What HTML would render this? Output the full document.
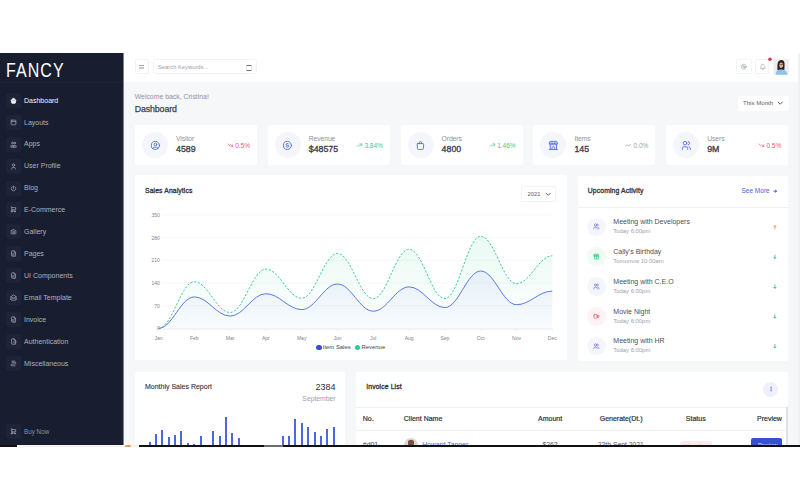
<!DOCTYPE html>
<html><head><meta charset="utf-8">
<style>
*{margin:0;padding:0;box-sizing:border-box}
html,body{width:800px;height:500px;overflow:hidden;background:#fff;font-family:"Liberation Sans",sans-serif}
.a{position:absolute;white-space:nowrap}
#sb{left:0;top:53px;width:123px;height:392px;background:#181d30}
.logo{left:6.3px;top:60.6px;font-size:19.3px;line-height:20px;color:#fff;letter-spacing:1.3px;transform:scaleX(0.83);transform-origin:0 0}
.ib{width:15px;height:15px;border-radius:2px;background:#1e2338}
.mt{font-size:7px;line-height:8px;color:#a3a8b5}
#hd{left:124px;top:53px;width:676px;height:29.7px;background:#fff;border-bottom:1px solid #eef0f3}
#main{left:124px;top:82px;width:676px;height:363px;background:#f6f7f9}
.card{background:#fff;border-radius:2.5px}
.hb{border:1px solid #f2f3f5;border-radius:1.8px;background:#fff}
.lbl{font-size:6.8px;line-height:8px;color:#8b93a5;letter-spacing:-0.1px}
.val{font-size:8.8px;line-height:10px;color:#3d424c;-webkit-text-stroke:0.35px #3d424c}
.ic{width:26px;height:26px;border-radius:50%;background:#f5f6fb}
.pct{font-size:6.5px;line-height:8px}
.ttl{font-size:6.8px;line-height:8px;color:#2e3340;-webkit-text-stroke:0.3px #2e3340;letter-spacing:0.12px}
.ax{font-size:5px;line-height:6px;color:#7d838f}
.at{font-size:7px;line-height:8px;color:#4b5060}
.as{font-size:5.9px;line-height:7px;color:#9ba1ad}
.aic{width:18.7px;height:18.7px;border-radius:50%}
.th{font-size:7px;line-height:8px;color:#2f3440;-webkit-text-stroke:0.2px #2f3440}
</style></head><body>

<div id="sb" class="a"></div>
<div class="a logo">FANCY</div>
<div class="a" style="left:0;top:82.3px;width:124px;height:1px;background:#1e2336"></div>
<div class="a ib" style="left:5.5px;top:92.80px"></div>
<svg class="a" style="left:9.50px;top:96.80px;" width="7" height="7" viewBox="0 0 24 24" fill="#f3f4f7" stroke="#f3f4f7" stroke-width="2.6" stroke-linecap="round" stroke-linejoin="round"><path d="M5 12H3l9-9 9 9h-2"/><path d="M5 12v7a2 2 0 0 0 2 2h10a2 2 0 0 0 2-2v-7"/><path d="M9 21v-6h6v6"/></svg>
<div class="a mt" style="left:24px;top:96.60px;color:#f3f4f7">Dashboard</div>
<div class="a ib" style="left:5.5px;top:114.72px"></div>
<svg class="a" style="left:9.50px;top:118.72px;" width="7" height="7" viewBox="0 0 24 24" fill="none" stroke="#9ca1ae" stroke-width="2.6" stroke-linecap="round" stroke-linejoin="round"><rect x="4" y="4" width="16" height="16" rx="2"/><path d="M4 9h16"/></svg>
<div class="a mt" style="left:24px;top:118.52px;color:#adb2bd">Layouts</div>
<div class="a ib" style="left:5.5px;top:136.65px"></div>
<svg class="a" style="left:9.50px;top:140.65px;" width="7" height="7" viewBox="0 0 24 24" fill="none" stroke="#9ca1ae" stroke-width="2.6" stroke-linecap="round" stroke-linejoin="round"><circle cx="8" cy="7" r="3"/><circle cx="16" cy="7" r="3"/><path d="M3 20v-4h10v4z"/><path d="M11 20v-4h10v4z"/></svg>
<div class="a mt" style="left:24px;top:140.45px;color:#adb2bd">Apps</div>
<div class="a ib" style="left:5.5px;top:158.57px"></div>
<svg class="a" style="left:9.50px;top:162.57px;" width="7" height="7" viewBox="0 0 24 24" fill="none" stroke="#9ca1ae" stroke-width="2.6" stroke-linecap="round" stroke-linejoin="round"><circle cx="12" cy="7" r="4"/><path d="M6 21v-2a4 4 0 0 1 4-4h4a4 4 0 0 1 4 4v2"/></svg>
<div class="a mt" style="left:24px;top:162.38px;color:#adb2bd">User Profile</div>
<div class="a ib" style="left:5.5px;top:180.50px"></div>
<svg class="a" style="left:9.50px;top:184.50px;" width="7" height="7" viewBox="0 0 24 24" fill="none" stroke="#9ca1ae" stroke-width="2.6" stroke-linecap="round" stroke-linejoin="round"><path d="M7 6a7.75 7.75 0 1 0 10 0"/><path d="M12 4v8"/></svg>
<div class="a mt" style="left:24px;top:184.30px;color:#adb2bd">Blog</div>
<div class="a ib" style="left:5.5px;top:202.43px"></div>
<svg class="a" style="left:9.50px;top:206.43px;" width="7" height="7" viewBox="0 0 24 24" fill="none" stroke="#9ca1ae" stroke-width="2.6" stroke-linecap="round" stroke-linejoin="round"><circle cx="6" cy="19" r="2"/><circle cx="17" cy="19" r="2"/><path d="M17 17H6V3H4"/><path d="M6 5l14 1-1 7H6"/></svg>
<div class="a mt" style="left:24px;top:206.23px;color:#adb2bd">E-Commerce</div>
<div class="a ib" style="left:5.5px;top:224.35px"></div>
<svg class="a" style="left:9.50px;top:228.35px;" width="7" height="7" viewBox="0 0 24 24" fill="none" stroke="#9ca1ae" stroke-width="2.6" stroke-linecap="round" stroke-linejoin="round"><path d="M5 8h3l2-3h4l2 3h3a1 1 0 0 1 1 1v10a1 1 0 0 1-1 1H5a1 1 0 0 1-1-1V9a1 1 0 0 1 1-1"/><circle cx="12" cy="14" r="3"/></svg>
<div class="a mt" style="left:24px;top:228.15px;color:#adb2bd">Gallery</div>
<div class="a ib" style="left:5.5px;top:246.27px"></div>
<svg class="a" style="left:9.50px;top:250.27px;" width="7" height="7" viewBox="0 0 24 24" fill="none" stroke="#9ca1ae" stroke-width="2.6" stroke-linecap="round" stroke-linejoin="round"><path d="M14 3v4a1 1 0 0 0 1 1h4"/><path d="M17 21H7a2 2 0 0 1-2-2V5a2 2 0 0 1 2-2h7l5 5v11a2 2 0 0 1-2 2z"/><path d="M9 13h6M9 17h4"/></svg>
<div class="a mt" style="left:24px;top:250.07px;color:#adb2bd">Pages</div>
<div class="a ib" style="left:5.5px;top:268.20px"></div>
<svg class="a" style="left:9.50px;top:272.20px;" width="7" height="7" viewBox="0 0 24 24" fill="none" stroke="#9ca1ae" stroke-width="2.6" stroke-linecap="round" stroke-linejoin="round"><path d="M14 3v4a1 1 0 0 0 1 1h4"/><path d="M17 21H7a2 2 0 0 1-2-2V5a2 2 0 0 1 2-2h7l5 5v11a2 2 0 0 1-2 2z"/><path d="M9 13h6M9 17h4"/></svg>
<div class="a mt" style="left:24px;top:272.00px;color:#adb2bd">UI Components</div>
<div class="a ib" style="left:5.5px;top:290.12px"></div>
<svg class="a" style="left:9.50px;top:294.12px;" width="7" height="7" viewBox="0 0 24 24" fill="none" stroke="#9ca1ae" stroke-width="2.6" stroke-linecap="round" stroke-linejoin="round"><path d="M3 9l9 6 9-6-9-6-9 6v10a2 2 0 0 0 2 2h14a2 2 0 0 0 2-2V9"/><path d="M3 19l6-6"/><path d="M15 13l6 6"/></svg>
<div class="a mt" style="left:24px;top:293.93px;color:#adb2bd">Email Template</div>
<div class="a ib" style="left:5.5px;top:312.05px"></div>
<svg class="a" style="left:9.50px;top:316.05px;" width="7" height="7" viewBox="0 0 24 24" fill="none" stroke="#9ca1ae" stroke-width="2.6" stroke-linecap="round" stroke-linejoin="round"><path d="M14 3v4a1 1 0 0 0 1 1h4"/><path d="M17 21H7a2 2 0 0 1-2-2V5a2 2 0 0 1 2-2h7l5 5v11a2 2 0 0 1-2 2z"/><path d="M9 13h6M9 17h4"/></svg>
<div class="a mt" style="left:24px;top:315.85px;color:#adb2bd">Invoice</div>
<div class="a ib" style="left:5.5px;top:333.98px"></div>
<svg class="a" style="left:9.50px;top:337.98px;" width="7" height="7" viewBox="0 0 24 24" fill="none" stroke="#9ca1ae" stroke-width="2.6" stroke-linecap="round" stroke-linejoin="round"><path d="M14 3v4a1 1 0 0 0 1 1h4"/><path d="M17 21H7a2 2 0 0 1-2-2V5a2 2 0 0 1 2-2h7l5 5v11a2 2 0 0 1-2 2z"/><path d="M11 14h10"/></svg>
<div class="a mt" style="left:24px;top:337.78px;color:#adb2bd">Authentication</div>
<div class="a ib" style="left:5.5px;top:355.90px"></div>
<svg class="a" style="left:9.50px;top:359.90px;" width="7" height="7" viewBox="0 0 24 24" fill="none" stroke="#9ca1ae" stroke-width="2.6" stroke-linecap="round" stroke-linejoin="round"><path d="M17 20H7a3 3 0 0 1 0-6h10a3 3 0 0 0 0-6H7"/><path d="M7 4h10"/></svg>
<div class="a mt" style="left:24px;top:359.70px;color:#adb2bd">Miscellaneous</div>
<div class="a ib" style="left:5.5px;top:424.20px"></div>
<svg class="a" style="left:9.50px;top:428.20px;" width="7" height="7" viewBox="0 0 24 24" fill="none" stroke="#9ca1ae" stroke-width="2.6" stroke-linecap="round" stroke-linejoin="round"><circle cx="6" cy="19" r="2"/><circle cx="17" cy="19" r="2"/><path d="M17 17H6V3H4"/><path d="M6 5l14 1-1 7H6"/></svg>
<div class="a mt" style="left:24px;top:427.80px;color:#8c92a0;font-size:6.3px">Buy Now</div>
<div id="hd" class="a"></div>
<div class="a hb" style="left:134.5px;top:59.3px;width:14px;height:14.8px;border-radius:2px"></div>
<div class="a" style="left:139px;top:65px;width:5.1px;height:0.8px;background:#9da2ac"></div><div class="a" style="left:139px;top:67.2px;width:5.1px;height:1.4px;background:#c4c7cd"></div>
<div class="a hb" style="left:152.5px;top:59.2px;width:104.2px;height:15px;border-radius:2.5px"></div>
<div class="a" style="left:158px;top:63.5px;font-size:5.8px;line-height:7px;color:#9aa0ab">Search Keywords...</div>
<div class="a" style="left:246.2px;top:65px;width:5.4px;height:6px;border-left:0.3px solid #e6e7ea;border-right:0.3px solid #e6e7ea;border-top:1px solid #6a6f78;border-bottom:1px solid #6a6f78;border-radius:1px"></div>
<div class="a hb" style="left:736px;top:59px;width:15.5px;height:15px"></div>
<svg class="a" style="left:740.20px;top:63.00px;" width="7.5" height="7.5" viewBox="0 0 24 24" fill="none" stroke="#a0a5b0" stroke-width="2" stroke-linecap="round" stroke-linejoin="round"><circle cx="12" cy="12" r="8"/><path d="M8 8l8 8"/><circle cx="12" cy="12" r="3"/></svg>
<div class="a hb" style="left:755.3px;top:59px;width:14px;height:15px"></div>
<svg class="a" style="left:758.50px;top:62.50px;" width="7.5" height="7.5" viewBox="0 0 24 24" fill="none" stroke="#a0a5b0" stroke-width="1.8" stroke-linecap="round" stroke-linejoin="round"><path d="M10 5a2 2 0 1 1 4 0a7 7 0 0 1 4 6v3a4 4 0 0 0 2 3H4a4 4 0 0 0 2-3v-3a7 7 0 0 1 4-6"/><path d="M9 17v1a3 3 0 0 0 6 0v-1"/></svg>
<svg class="a" style="left:0;top:0" width="800" height="500"><circle cx="770" cy="59.3" r="1.8" fill="#e8334d"/></svg>
<svg class="a" style="left:0;top:0" width="800" height="500"><rect x="773.5" y="58.8" width="15.6" height="16" rx="1.5" fill="#eceef0"/><path d="M777.6,70.5 C777.2,66 777.3,62 779.2,60.7 C780.5,59.8 782.3,59.8 783.4,60.7 C785,62 784.6,66 784.3,70.5 Z" fill="#2a2020"/><ellipse cx="781.2" cy="65.3" rx="1.9" ry="2.8" fill="#dcae98"/><path d="M779.5,64.6 h3.5" stroke="#3a3030" stroke-width="0.6"/><path d="M775.6,74.8 C775.8,71 777.5,69.6 781,69.5 C784.6,69.6 787,71 787.5,74.8 Z" fill="#8ec4ea"/></svg>
<div id="main" class="a"></div>
<div class="a" style="left:123px;top:53px;width:1px;height:392px;background:#80838e"></div>
<div class="a" style="left:798px;top:53px;width:1.5px;height:392px;background:#f0f1f3"></div>
<div class="a" style="left:134.7px;top:92.8px;font-size:6.9px;line-height:8px;color:#8a93a6">Welcome back, Cristina!</div>
<div class="a" style="left:134.7px;top:103.7px;font-size:8.8px;line-height:10px;color:#3a3f4b;-webkit-text-stroke:0.25px #3a3f4b;letter-spacing:-0.1px">Dashboard</div>
<div class="a card" style="left:737.9px;top:95.6px;width:50.7px;height:15.3px;border-radius:2px"></div>
<div class="a" style="left:743px;top:98.8px;font-size:6.1px;line-height:7px;color:#5d626e">This Month</div>
<svg class="a" style="left:775.80px;top:99.20px;" width="8.4" height="8.4" viewBox="0 0 24 24" fill="none" stroke="#3f444e" stroke-width="2.5" stroke-linecap="round" stroke-linejoin="round"><path d="M6 9l6 6 6-6"/></svg>
<div class="a card" style="left:135.0px;top:125px;width:122px;height:40px"></div>
<div class="a ic" style="left:142.0px;top:132px"></div>
<svg class="a" style="left:149.60px;top:139.60px;" width="10.8" height="10.8" viewBox="0 0 24 24" fill="none" stroke="#3f5fe0" stroke-width="1.8" stroke-linecap="round" stroke-linejoin="round"><circle cx="12" cy="12" r="9"/><circle cx="12" cy="10" r="3"/><path d="M6.2 18.8A4 4 0 0 1 10 16h4a4 4 0 0 1 3.8 2.9"/></svg>
<div class="a lbl" style="left:176.0px;top:134.6px">Visitor</div>
<div class="a val" style="left:176.0px;top:144.3px">4589</div>
<div class="a pct" style="right:550.0px;top:141.9px;color:#ef5a6f">0.5%</div>
<svg class="a" style="left:227.00px;top:142.00px;" width="6.6" height="6.6" viewBox="0 0 24 24" fill="none" stroke="#ef5a6f" stroke-width="2.4" stroke-linecap="round" stroke-linejoin="round"><path d="M3 7l6 6 4-4 8 8"/><path d="M21 10v7h-7"/></svg>
<div class="a card" style="left:267.8px;top:125px;width:122px;height:40px"></div>
<div class="a ic" style="left:274.8px;top:132px"></div>
<svg class="a" style="left:282.40px;top:139.60px;" width="10.8" height="10.8" viewBox="0 0 24 24" fill="none" stroke="#3f5fe0" stroke-width="1.8" stroke-linecap="round" stroke-linejoin="round"><circle cx="12" cy="12" r="9"/><path d="M14.8 9A2 2 0 0 0 13 8h-2a2 2 0 0 0 0 4h2a2 2 0 0 1 0 4h-2a2 2 0 0 1-1.8-1"/></svg>
<div class="a lbl" style="left:308.8px;top:134.6px">Revenue</div>
<div class="a val" style="left:308.8px;top:144.3px">$48575</div>
<div class="a pct" style="right:417.2px;top:141.9px;color:#3cc98a">3.84%</div>
<svg class="a" style="left:356.00px;top:142.00px;" width="6.6" height="6.6" viewBox="0 0 24 24" fill="none" stroke="#3cc98a" stroke-width="2.4" stroke-linecap="round" stroke-linejoin="round"><path d="M3 17l6-6 4 4 8-8"/><path d="M14 7h7v7"/></svg>
<div class="a card" style="left:400.6px;top:125px;width:122px;height:40px"></div>
<div class="a ic" style="left:407.6px;top:132px"></div>
<svg class="a" style="left:415.20px;top:139.60px;" width="10.8" height="10.8" viewBox="0 0 24 24" fill="none" stroke="#3f5fe0" stroke-width="1.8" stroke-linecap="round" stroke-linejoin="round"><path d="M6.3 8h11.4a1.5 1.5 0 0 1 1.5 1.6l-.7 9.4a2 2 0 0 1-2 2H7.5a2 2 0 0 1-2-2l-.7-9.4A1.5 1.5 0 0 1 6.3 8z"/><path d="M9.5 8V6a2.5 2.5 0 0 1 5 0v2"/></svg>
<div class="a lbl" style="left:441.6px;top:134.6px">Orders</div>
<div class="a val" style="left:441.6px;top:144.3px">4800</div>
<div class="a pct" style="right:284.4px;top:141.9px;color:#3cc98a">1.46%</div>
<svg class="a" style="left:488.80px;top:142.00px;" width="6.6" height="6.6" viewBox="0 0 24 24" fill="none" stroke="#3cc98a" stroke-width="2.4" stroke-linecap="round" stroke-linejoin="round"><path d="M3 17l6-6 4 4 8-8"/><path d="M14 7h7v7"/></svg>
<div class="a card" style="left:533.4px;top:125px;width:122px;height:40px"></div>
<div class="a ic" style="left:540.4px;top:132px"></div>
<svg class="a" style="left:548.00px;top:139.60px;" width="10.8" height="10.8" viewBox="0 0 24 24" fill="none" stroke="#3f5fe0" stroke-width="1.8" stroke-linecap="round" stroke-linejoin="round"><path d="M3 21h18"/><path d="M3 7v1a3 3 0 0 0 6 0V7m0 1a3 3 0 0 0 6 0V7m0 1a3 3 0 0 0 6 0V7H3l2-4h14l2 4"/><path d="M5 21V10.85"/><path d="M19 21V10.85"/><path d="M9 21v-4a2 2 0 0 1 2-2h2a2 2 0 0 1 2 2v4"/></svg>
<div class="a lbl" style="left:574.4px;top:134.6px">Items</div>
<div class="a val" style="left:574.4px;top:144.3px">145</div>
<div class="a pct" style="right:151.6px;top:141.9px;color:#9aa0ab">0.0%</div>
<svg class="a" style="left:625.40px;top:142.00px;" width="6.6" height="6.6" viewBox="0 0 24 24" fill="none" stroke="#9aa0ab" stroke-width="2.4" stroke-linecap="round" stroke-linejoin="round"><path d="M3 15l6-5 4 4 8-6"/></svg>
<div class="a card" style="left:666.2px;top:125px;width:122px;height:40px"></div>
<div class="a ic" style="left:673.2px;top:132px"></div>
<svg class="a" style="left:680.80px;top:139.60px;" width="10.8" height="10.8" viewBox="0 0 24 24" fill="none" stroke="#3f5fe0" stroke-width="1.8" stroke-linecap="round" stroke-linejoin="round"><circle cx="9" cy="7" r="4"/><path d="M3 21v-2a4 4 0 0 1 4-4h4a4 4 0 0 1 4 4v2"/><path d="M16 3.13a4 4 0 0 1 0 7.75"/><path d="M21 21v-2a4 4 0 0 0-3-3.85"/></svg>
<div class="a lbl" style="left:707.2px;top:134.6px">Users</div>
<div class="a val" style="left:707.2px;top:144.3px">9M</div>
<div class="a pct" style="right:18.8px;top:141.9px;color:#ef5a6f">0.5%</div>
<svg class="a" style="left:758.20px;top:142.00px;" width="6.6" height="6.6" viewBox="0 0 24 24" fill="none" stroke="#ef5a6f" stroke-width="2.4" stroke-linecap="round" stroke-linejoin="round"><path d="M3 7l6 6 4-4 8 8"/><path d="M21 10v7h-7"/></svg>
<div class="a card" style="left:135px;top:175.4px;width:432px;height:184.6px"></div>
<div class="a ttl" style="left:145px;top:187.3px">Sales Analytics</div>
<div class="a hb" style="left:521.3px;top:186px;width:35px;height:16.2px;border-radius:2px"></div>
<div class="a" style="left:527.5px;top:190.8px;font-size:5.8px;line-height:7px;color:#555a66">2021</div>
<svg class="a" style="left:543.90px;top:189.80px;" width="8.5" height="8.5" viewBox="0 0 24 24" fill="none" stroke="#444955" stroke-width="2.4" stroke-linecap="round" stroke-linejoin="round"><path d="M6 9l6 6 6-6"/></svg>
<div class="a ax" style="right:640.2px;top:325.3px">0</div>
<div class="a ax" style="right:640.2px;top:302.6px">70</div>
<div class="a ax" style="right:640.2px;top:279.9px">140</div>
<div class="a ax" style="right:640.2px;top:257.2px">210</div>
<div class="a ax" style="right:640.2px;top:234.5px">280</div>
<div class="a ax" style="right:640.2px;top:211.8px">350</div>
<div class="a ax" style="left:148.5px;width:20px;text-align:center;top:334.7px">Jan</div>
<div class="a ax" style="left:184.3px;width:20px;text-align:center;top:334.7px">Feb</div>
<div class="a ax" style="left:220.1px;width:20px;text-align:center;top:334.7px">Mar</div>
<div class="a ax" style="left:255.9px;width:20px;text-align:center;top:334.7px">Apr</div>
<div class="a ax" style="left:291.7px;width:20px;text-align:center;top:334.7px">May</div>
<div class="a ax" style="left:327.5px;width:20px;text-align:center;top:334.7px">Jun</div>
<div class="a ax" style="left:363.3px;width:20px;text-align:center;top:334.7px">Jul</div>
<div class="a ax" style="left:399.1px;width:20px;text-align:center;top:334.7px">Aug</div>
<div class="a ax" style="left:434.9px;width:20px;text-align:center;top:334.7px">Sep</div>
<div class="a ax" style="left:470.7px;width:20px;text-align:center;top:334.7px">Oct</div>
<div class="a ax" style="left:506.5px;width:20px;text-align:center;top:334.7px">Nov</div>
<div class="a ax" style="left:542.3px;width:20px;text-align:center;top:334.7px">Dec</div>
<svg class="a" style="left:0;top:0" width="800" height="500">
<defs>
<linearGradient id="gg" x1="0" y1="0" x2="0" y2="1"><stop offset="0" stop-color="#2fd08c" stop-opacity="0.10"/><stop offset="1" stop-color="#2fd08c" stop-opacity="0.01"/></linearGradient>
<linearGradient id="bg" x1="0" y1="0" x2="0" y2="1"><stop offset="0" stop-color="#4a6cf7" stop-opacity="0.08"/><stop offset="1" stop-color="#4a6cf7" stop-opacity="0.02"/></linearGradient>
</defs>
<line x1="163" x2="552.3" y1="328.4" y2="328.4" stroke="#f3f4f6" stroke-width="0.7"/><line x1="163" x2="552.3" y1="305.7" y2="305.7" stroke="#f3f4f6" stroke-width="0.7"/><line x1="163" x2="552.3" y1="283.0" y2="283.0" stroke="#f3f4f6" stroke-width="0.7"/><line x1="163" x2="552.3" y1="260.3" y2="260.3" stroke="#f3f4f6" stroke-width="0.7"/><line x1="163" x2="552.3" y1="237.6" y2="237.6" stroke="#f3f4f6" stroke-width="0.7"/><line x1="163" x2="552.3" y1="214.9" y2="214.9" stroke="#f3f4f6" stroke-width="0.7"/><path d="M158.5,328.4 C172.1,328.4 180.7,281.7 194.3,281.7 C207.9,281.7 216.5,312.5 230.1,312.5 C243.7,312.5 252.3,269.1 265.9,269.1 C279.5,269.1 288.1,298.2 301.7,298.2 C315.3,298.2 323.9,253.5 337.5,253.5 C351.1,253.5 359.7,298.6 373.3,298.6 C386.9,298.6 395.5,249.3 409.1,249.3 C422.7,249.3 431.3,298.6 444.9,298.6 C458.5,298.6 467.1,236.3 480.7,236.3 C494.3,236.3 502.9,283.6 516.5,283.6 C530.1,283.6 538.7,255.8 552.3,255.8 L552.3,328.4 L158.5,328.4 Z" fill="url(#gg)"/><line x1="158.5" x2="552.3" y1="329.3" y2="329.3" stroke="#e9ebef" stroke-width="0.8"/><line x1="158.5" x2="158.5" y1="329.3" y2="331.3" stroke="#e9ebef" stroke-width="0.8"/><line x1="194.3" x2="194.3" y1="329.3" y2="331.3" stroke="#e9ebef" stroke-width="0.8"/><line x1="230.1" x2="230.1" y1="329.3" y2="331.3" stroke="#e9ebef" stroke-width="0.8"/><line x1="265.9" x2="265.9" y1="329.3" y2="331.3" stroke="#e9ebef" stroke-width="0.8"/><line x1="301.7" x2="301.7" y1="329.3" y2="331.3" stroke="#e9ebef" stroke-width="0.8"/><line x1="337.5" x2="337.5" y1="329.3" y2="331.3" stroke="#e9ebef" stroke-width="0.8"/><line x1="373.3" x2="373.3" y1="329.3" y2="331.3" stroke="#e9ebef" stroke-width="0.8"/><line x1="409.1" x2="409.1" y1="329.3" y2="331.3" stroke="#e9ebef" stroke-width="0.8"/><line x1="444.9" x2="444.9" y1="329.3" y2="331.3" stroke="#e9ebef" stroke-width="0.8"/><line x1="480.7" x2="480.7" y1="329.3" y2="331.3" stroke="#e9ebef" stroke-width="0.8"/><line x1="516.5" x2="516.5" y1="329.3" y2="331.3" stroke="#e9ebef" stroke-width="0.8"/><line x1="552.3" x2="552.3" y1="329.3" y2="331.3" stroke="#e9ebef" stroke-width="0.8"/><path d="M158.5,328.4 C172.1,328.4 180.7,296.9 194.3,296.9 C207.9,296.9 216.5,316.1 230.1,316.1 C243.7,316.1 252.3,293.7 265.9,293.7 C279.5,293.7 288.1,309.6 301.7,309.6 C315.3,309.6 323.9,284.0 337.5,284.0 C351.1,284.0 359.7,311.2 373.3,311.2 C386.9,311.2 395.5,286.9 409.1,286.9 C422.7,286.9 431.3,307.6 444.9,307.6 C458.5,307.6 467.1,271.0 480.7,271.0 C494.3,271.0 502.9,304.7 516.5,304.7 C530.1,304.7 538.7,291.1 552.3,291.1 L552.3,328.4 L158.5,328.4 Z" fill="url(#bg)"/><path d="M158.5,328.4 C172.1,328.4 180.7,281.7 194.3,281.7 C207.9,281.7 216.5,312.5 230.1,312.5 C243.7,312.5 252.3,269.1 265.9,269.1 C279.5,269.1 288.1,298.2 301.7,298.2 C315.3,298.2 323.9,253.5 337.5,253.5 C351.1,253.5 359.7,298.6 373.3,298.6 C386.9,298.6 395.5,249.3 409.1,249.3 C422.7,249.3 431.3,298.6 444.9,298.6 C458.5,298.6 467.1,236.3 480.7,236.3 C494.3,236.3 502.9,283.6 516.5,283.6 C530.1,283.6 538.7,255.8 552.3,255.8" fill="none" stroke="#3ccf95" stroke-width="1" stroke-dasharray="2.2 1.6"/><path d="M158.5,328.4 C172.1,328.4 180.7,296.9 194.3,296.9 C207.9,296.9 216.5,316.1 230.1,316.1 C243.7,316.1 252.3,293.7 265.9,293.7 C279.5,293.7 288.1,309.6 301.7,309.6 C315.3,309.6 323.9,284.0 337.5,284.0 C351.1,284.0 359.7,311.2 373.3,311.2 C386.9,311.2 395.5,286.9 409.1,286.9 C422.7,286.9 431.3,307.6 444.9,307.6 C458.5,307.6 467.1,271.0 480.7,271.0 C494.3,271.0 502.9,304.7 516.5,304.7 C530.1,304.7 538.7,291.1 552.3,291.1" fill="none" stroke="#5470dd" stroke-width="0.95"/></svg>
<div class="a" style="left:316.3px;top:345.1px;width:5.4px;height:5.4px;border-radius:50%;background:#3451d1"></div>
<div class="a" style="left:322.8px;top:343.9px;font-size:5.9px;line-height:7px;color:#3f4450">Item Sales</div>
<div class="a" style="left:355.1px;top:345.1px;width:5.4px;height:5.4px;border-radius:50%;background:#2fcc8b"></div>
<div class="a" style="left:361.6px;top:343.9px;font-size:5.9px;line-height:7px;color:#3f4450">Revenue</div>
<div class="a card" style="left:577.8px;top:175.75px;width:210px;height:184.8px"></div>
<div class="a ttl" style="left:587.8px;top:187.3px">Upcoming Activity</div>
<div class="a" style="left:741.5px;top:187px;font-size:6.5px;line-height:8px;color:#4a5fd8">See More</div>
<svg class="a" style="left:0;top:0" width="800" height="500"><path d="M773.3,191.2 H775.8" stroke="#4a5fd8" stroke-width="0.9"/><path d="M775.2,189.4 L777.3,191.2 L775.2,193 Z" fill="#4a5fd8"/></svg>
<div class="a" style="left:577.8px;top:207px;width:210px;height:1px;background:#f0f1f4"></div>
<div class="a aic" style="left:587.4px;top:217.5px;background:#f4f5fd"></div>
<svg class="a" style="left:593.30px;top:223.40px;" width="6.8" height="6.8" viewBox="0 0 24 24" fill="none" stroke="#5b6be0" stroke-width="2.3" stroke-linecap="round" stroke-linejoin="round"><circle cx="9" cy="7" r="4"/><path d="M3 21v-2a4 4 0 0 1 4-4h4a4 4 0 0 1 4 4v2"/><path d="M16 3.13a4 4 0 0 1 0 7.75"/><path d="M21 21v-2a4 4 0 0 0-3-3.85"/></svg>
<div class="a at" style="left:613.3px;top:218.2px">Meeting with Developers</div>
<div class="a as" style="left:613.3px;top:228.1px">Today 6:00pm</div>
<svg class="a" style="left:0;top:0" width="800" height="500"><path d="M774.9,226.30 V229.50" stroke="#f3906a" stroke-width="0.9"/><path d="M773,226.80 L774.9,224.90 L776.8,226.80 Z" fill="#f3906a"/></svg>
<div class="a aic" style="left:587.4px;top:247.3px;background:#f0fbf6"></div>
<svg class="a" style="left:593.30px;top:253.20px;" width="6.8" height="6.8" viewBox="0 0 24 24" fill="none" stroke="#2ec27e" stroke-width="2.3" stroke-linecap="round" stroke-linejoin="round"><rect x="3" y="8" width="18" height="4" rx="1"/><path d="M12 8v13"/><path d="M19 12v7a2 2 0 0 1-2 2H7a2 2 0 0 1-2-2v-7"/><path d="M7.5 8a2.5 2.5 0 0 1 0-5A4.8 8 0 0 1 12 8a4.8 8 0 0 1 4.5-5 2.5 2.5 0 0 1 0 5"/></svg>
<div class="a at" style="left:613.3px;top:248.0px">Cally's Birthday</div>
<div class="a as" style="left:613.3px;top:257.9px">Tomorrow 10:00am</div>
<svg class="a" style="left:0;top:0" width="800" height="500"><path d="M774.9,254.60 V257.80" stroke="#45c99a" stroke-width="0.9"/><path d="M773,257.30 L774.9,259.20 L776.8,257.30 Z" fill="#45c99a"/></svg>
<div class="a aic" style="left:587.4px;top:277.1px;background:#f4f5fd"></div>
<svg class="a" style="left:593.30px;top:283.00px;" width="6.8" height="6.8" viewBox="0 0 24 24" fill="none" stroke="#5b6be0" stroke-width="2.3" stroke-linecap="round" stroke-linejoin="round"><circle cx="9" cy="7" r="4"/><path d="M3 21v-2a4 4 0 0 1 4-4h4a4 4 0 0 1 4 4v2"/><path d="M16 3.13a4 4 0 0 1 0 7.75"/><path d="M21 21v-2a4 4 0 0 0-3-3.85"/></svg>
<div class="a at" style="left:613.3px;top:277.8px">Meeting with C.E.O</div>
<div class="a as" style="left:613.3px;top:287.7px">Today 6:00pm</div>
<svg class="a" style="left:0;top:0" width="800" height="500"><path d="M774.9,284.40 V287.60" stroke="#45c99a" stroke-width="0.9"/><path d="M773,287.10 L774.9,289.00 L776.8,287.10 Z" fill="#45c99a"/></svg>
<div class="a aic" style="left:587.4px;top:306.9px;background:#fef2f4"></div>
<svg class="a" style="left:593.30px;top:312.80px;" width="6.8" height="6.8" viewBox="0 0 24 24" fill="none" stroke="#ef4d5e" stroke-width="2.3" stroke-linecap="round" stroke-linejoin="round"><path d="M15 10l4.55-2.28A1 1 0 0 1 21 8.62v6.76a1 1 0 0 1-1.45.9L15 14v-4z"/><rect x="3" y="6" width="12" height="12" rx="2"/></svg>
<div class="a at" style="left:613.3px;top:307.6px">Movie Night</div>
<div class="a as" style="left:613.3px;top:317.5px">Today 6:00pm</div>
<svg class="a" style="left:0;top:0" width="800" height="500"><path d="M774.9,314.20 V317.40" stroke="#45c99a" stroke-width="0.9"/><path d="M773,316.90 L774.9,318.80 L776.8,316.90 Z" fill="#45c99a"/></svg>
<div class="a aic" style="left:587.4px;top:336.6px;background:#f4f5fd"></div>
<svg class="a" style="left:593.30px;top:342.60px;" width="6.8" height="6.8" viewBox="0 0 24 24" fill="none" stroke="#5b6be0" stroke-width="2.3" stroke-linecap="round" stroke-linejoin="round"><circle cx="9" cy="7" r="4"/><path d="M3 21v-2a4 4 0 0 1 4-4h4a4 4 0 0 1 4 4v2"/><path d="M16 3.13a4 4 0 0 1 0 7.75"/><path d="M21 21v-2a4 4 0 0 0-3-3.85"/></svg>
<div class="a at" style="left:613.3px;top:337.4px">Meeting with HR</div>
<div class="a as" style="left:613.3px;top:347.3px">Today 6:00pm</div>
<svg class="a" style="left:0;top:0" width="800" height="500"><path d="M774.9,344.00 V347.20" stroke="#45c99a" stroke-width="0.9"/><path d="M773,346.70 L774.9,348.60 L776.8,346.70 Z" fill="#45c99a"/></svg>
<div class="a card" style="left:135.3px;top:372.3px;width:210px;height:80px"></div>
<div class="a" style="left:145px;top:383.1px;font-size:7px;line-height:8px;color:#2b303b;-webkit-text-stroke:0.1px #2b303b">Monthly Sales Report</div>
<div class="a" style="right:464.4px;top:382px;font-size:9px;line-height:11px;color:#2b303b">2384</div>
<div class="a" style="right:464.4px;top:394.5px;font-size:6.8px;line-height:7px;color:#9ba1ad">September</div>
<div class="a" style="left:148.7px;top:442.3px;width:2px;height:2.9px;background:#4a68e0"></div>
<div class="a" style="left:154.8px;top:434.0px;width:2px;height:11.2px;background:#4a68e0"></div>
<div class="a" style="left:161.3px;top:429.6px;width:2px;height:15.6px;background:#4a68e0"></div>
<div class="a" style="left:167.8px;top:437.0px;width:2px;height:8.2px;background:#4a68e0"></div>
<div class="a" style="left:174.0px;top:434.9px;width:2px;height:10.3px;background:#4a68e0"></div>
<div class="a" style="left:180.4px;top:431.0px;width:2px;height:14.2px;background:#4a68e0"></div>
<div class="a" style="left:186.6px;top:442.8px;width:2px;height:2.4px;background:#4a68e0"></div>
<div class="a" style="left:193.0px;top:444.3px;width:2px;height:0.9px;background:#4a68e0"></div>
<div class="a" style="left:199.5px;top:435.5px;width:2px;height:9.7px;background:#4a68e0"></div>
<div class="a" style="left:212.1px;top:430.5px;width:2px;height:14.7px;background:#4a68e0"></div>
<div class="a" style="left:218.6px;top:435.8px;width:2px;height:9.4px;background:#4a68e0"></div>
<div class="a" style="left:225.0px;top:417.3px;width:2px;height:27.9px;background:#4a68e0"></div>
<div class="a" style="left:231.2px;top:432.9px;width:2px;height:12.3px;background:#4a68e0"></div>
<div class="a" style="left:237.7px;top:437.8px;width:2px;height:7.4px;background:#4a68e0"></div>
<div class="a" style="left:281.5px;top:435.8px;width:2px;height:9.4px;background:#4a68e0"></div>
<div class="a" style="left:288.0px;top:435.8px;width:2px;height:9.4px;background:#4a68e0"></div>
<div class="a" style="left:294.4px;top:418.8px;width:2px;height:26.4px;background:#4a68e0"></div>
<div class="a" style="left:300.8px;top:423.2px;width:2px;height:22.0px;background:#4a68e0"></div>
<div class="a" style="left:307.3px;top:427.0px;width:2px;height:18.2px;background:#4a68e0"></div>
<div class="a" style="left:313.5px;top:432.0px;width:2px;height:13.2px;background:#4a68e0"></div>
<div class="a" style="left:320.0px;top:435.5px;width:2px;height:9.7px;background:#4a68e0"></div>
<div class="a" style="left:326.4px;top:429.0px;width:2px;height:16.2px;background:#4a68e0"></div>
<div class="a" style="left:332.9px;top:427.0px;width:2px;height:18.2px;background:#4a68e0"></div>
<div class="a card" style="left:355.6px;top:371.9px;width:432px;height:80px"></div>
<div class="a ttl" style="left:366.3px;top:383px">Invoice List</div>
<div class="a" style="left:762.7px;top:381.5px;width:15.7px;height:15.7px;border-radius:50%;background:#eef0fb"></div>
<svg class="a" style="left:767.50px;top:386.30px;" width="6" height="6" viewBox="0 0 24 24" fill="none" stroke="#5b6be0" stroke-width="2.4" stroke-linecap="round" stroke-linejoin="round"><circle cx="12" cy="5" r="1"/><circle cx="12" cy="12" r="1"/><circle cx="12" cy="19" r="1"/></svg>
<div class="a" style="left:355.6px;top:406.5px;width:432px;height:1px;background:#f0f1f4"></div>
<div class="a" style="left:355.6px;top:430px;width:432px;height:1px;background:#f0f1f4"></div>
<div class="a" style="left:786.3px;top:407px;width:1.6px;height:40px;background:#dfe1e5"></div>
<div class="a th" style="left:362.8px;top:414.6px">No.</div>
<div class="a th" style="left:403.8px;top:414.6px">Client Name</div>
<div class="a th" style="left:538px;top:414.6px">Amount</div>
<div class="a th" style="left:599.7px;top:414.6px">Generate(Dt.)</div>
<div class="a th" style="left:685.8px;top:414.6px">Status</div>
<div class="a th" style="left:757px;top:414.6px">Preview</div>
<div class="a" style="left:362.8px;top:440.8px;font-size:6.9px;line-height:8px;color:#3a3f4a">#d01</div>
<div class="a" style="left:403.8px;top:437.8px;width:14.5px;height:14.5px;border-radius:50%;background:#dcd6d2"></div>
<div class="a" style="left:408px;top:440px;width:6px;height:6px;border-radius:2px;background:#7a5040"></div>
<div class="a" style="left:422.2px;top:440.8px;font-size:6.8px;line-height:8px;color:#4a5fd8;text-decoration:underline">Howard Tanner</div>
<div class="a" style="left:542.5px;top:440.8px;font-size:6.8px;line-height:8px;color:#555">$262</div>
<div class="a" style="left:597.8px;top:440.8px;font-size:6.8px;line-height:8px;color:#555">22th Sept 2021</div>
<div class="a" style="left:680px;top:441.4px;width:31.5px;height:8px;border-radius:2px;background:#fde8ea"></div>
<div class="a" style="left:750.8px;top:438.1px;width:31.4px;height:12px;border-radius:2px;background:#3451d1"></div>
<div class="a" style="left:758px;top:442.2px;font-size:5.5px;line-height:7px;color:#e8ecff">Preview</div>
<div class="a" style="left:685px;top:443px;font-size:5.5px;line-height:7px;color:#f3a0aa">Unpaid</div>
<div class="a" style="left:0;top:445px;width:800px;height:55px;background:#fff"></div>
<div class="a" style="left:0;top:445px;width:17px;height:1.8px;background:#111"></div>
<div class="a" style="left:17px;top:445px;width:122px;height:1.8px;background:#f3f3f0"></div>
<div class="a" style="left:125px;top:445px;width:6px;height:1.5px;background:#e0a060;border-radius:2px"></div>
<div class="a" style="left:138.5px;top:445.2px;width:661.5px;height:1.6px;background:#111"></div>
<div class="a" style="left:264px;top:445.2px;width:19px;height:1.5px;background:#6d6d6d"></div>
</body></html>
